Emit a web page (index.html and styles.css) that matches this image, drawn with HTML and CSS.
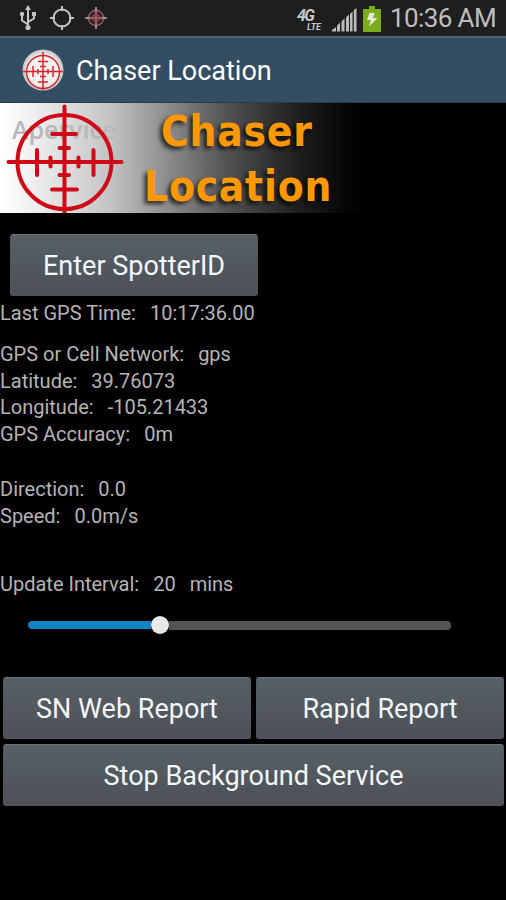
FILE: index.html
```
<!DOCTYPE html>
<html lang="en">
<head>
    <meta charset="UTF-8">
    <meta name="viewport" content="width=device-width, initial-scale=1.0">
    <title>Chaser Location</title>
    <link rel="stylesheet" href="styles.css">
</head>
<body>
    <div class="status-bar">
        <div class="status-left">
            <svg class="icon-usb" width="18" height="26" viewBox="0 0 18 26" fill="none" stroke="#c4c4c4" stroke-width="2">
                <path d="M9 3v19M9 19.500L3 15.500V9M9 17l6-3.500V8"/>
                <path d="M9 0l3 5H6z" fill="#c4c4c4" stroke="none"/>
                <circle cx="9" cy="22.500" r="2.600" fill="#c4c4c4" stroke="none"/>
                <circle cx="3" cy="9" r="2.200" fill="#c4c4c4" stroke="none"/>
                <path d="M13 7h4v4h-4z" fill="#c4c4c4" stroke="none"/>
            </svg>
            <svg class="icon-gps" width="24" height="24" viewBox="0 0 24 24" fill="none" stroke="#c4c4c4" stroke-width="2">
                <circle cx="12" cy="12" r="8.500"/>
                <path d="M12 0v5M12 19v5M0 12h5M19 12h5"/>
            </svg>
            <svg class="icon-chaser" width="22" height="22" viewBox="0 0 22 22" fill="none">
                <circle cx="11" cy="11" r="7.500" stroke="#a35b62" stroke-width="1.500"/>
                <path d="M11 2v18M2 11h18" stroke="#a35b62" stroke-width="2.400"/>
                <path d="M8 8h6M8 14h6M8 8v6M14 8v6" stroke="#8b4a50" stroke-width="1.200"/>
                <path d="M11 0v4M11 18v4M0 11h4M18 11h4" stroke="#aaa" stroke-width="1.500"/>
            </svg>
        </div>
        <div class="status-right">
            <div class="network"><span class="gen">4G</span><span class="lte">LTE</span></div>
            <svg class="icon-signal" width="25" height="24" viewBox="0 0 25 24" fill="#bcbcbc">
                <path d="M0 23.500V22l4-3v4.500zM5 23.500v-6l3-3v9zM9.500 23.500v-10l3-3v13zM14 23.500v-14l3-3v17zM18 23.500V6l2.500-2.500v20zM21.800 23.500V2l2.700-2v23.500z"/>
            </svg>
            <svg class="icon-battery" width="18" height="26" viewBox="0 0 18 26">
                <path d="M6 0h6v3h6v23H0V3h6z" fill="#7cab1b"/>
                <path d="M6.500 7h5l-1.500 5h4.500L6 20.500l2-6.500H4z" fill="#e6eedb"/>
            </svg>
            <span class="clock">10:36 AM</span>
        </div>
    </div>

    <div class="title-bar">
        <svg class="app-icon" width="42" height="44" viewBox="0 0 42 44" fill="none" stroke="#d3252c">
            <defs>
                <radialGradient id="ball">
                    <stop offset="0.700" stop-color="#f6f0f0"/>
                    <stop offset="1" stop-color="#c3c4c9"/>
                </radialGradient>
            </defs>
            <circle cx="21" cy="22" r="20.500" fill="url(#ball)" stroke="none"/>
            <circle cx="21" cy="24" r="16.500" stroke-width="1.400"/>
            <path d="M21 4v38M1 23.500h40" stroke-width="1.500"/>
            <path d="M16 13.500h10M18 18.500h6M18 28.500h6M16 34h10M11 18v11M16 21v5M26 21v5M31 18v11" stroke-width="1.500"/>
        </svg>
        <h1>Chaser Location</h1>
    </div>

    <div class="banner">
        <span class="watermark">Apervice</span>
        <svg class="reticle" width="120" height="110" viewBox="0 0 120 110" fill="none" stroke="#cf0a18" stroke-width="4" stroke-linecap="round">
            <circle cx="59.500" cy="59" r="47"/>
            <path d="M59.500 3.500v110M3.500 59h113"/>
            <path d="M47 31h24M54.500 45h9.500M54.500 72h9.500M47 86.500h25M32 47v25M45.500 54.500v9M73.500 54.500v9M88.500 47v25"/>
        </svg>
        <div class="logo-text">
            <div class="logo-chaser">Chaser</div>
            <div class="logo-location">Location</div>
        </div>
    </div>

    <div class="content">
        <button class="spotter">Enter SpotterID</button>
        <div class="info">
            <p class="gps-time"><span>Last GPS Time:</span><span>10:17:36.00</span></p>
            <p><span>GPS or Cell Network:</span><span>gps</span></p>
            <p><span>Latitude:</span><span>39.76073</span></p>
            <p><span>Longitude:</span><span>-105.21433</span></p>
            <p><span>GPS Accuracy:</span><span>0m</span></p>
            <p class="direction"><span>Direction:</span><span>0.0</span></p>
            <p><span>Speed:</span><span>0.0m/s</span></p>
            <p class="interval"><span>Update Interval:</span><span>20</span><span>mins</span></p>
        </div>
        <div class="slider">
            <div class="fill"></div>
            <div class="thumb"></div>
            <div class="rest"></div>
        </div>
        <div class="buttons">
            <button>SN Web Report</button>
            <button>Rapid Report</button>
            <button class="stop">Stop Background Service</button>
        </div>
    </div>
</body>
</html>
```
FILE: styles.css
```
* {
    box-sizing: border-box;
}
body {
    font-family: Roboto, "Liberation Sans", sans-serif;
    margin: 0;
    height: 900px;
    background-color: #000;
    color: #b4b4b4;
    overflow: hidden;
}
.status-bar {
    display: flex;
    justify-content: space-between;
    height: 36px;
    padding: 0 10px 0 19px;
    background-color: #1e1e1e;
}
.status-left, .status-right {
    display: flex;
    align-items: flex-start;
}
.icon-usb {
    margin-top: 5px;
}
.icon-gps {
    margin: 6px 0 0 13px;
}
.icon-chaser {
    margin: 7px 0 0 11px;
}
.network {
    display: flex;
    width: 27px;
    margin: 10px 8px 0 0;
    font-weight: bold;
    font-style: italic;
    color: #c8c8c8;
}
.gen {
    font-size: 16px;
    line-height: 12px;
    letter-spacing: -1.5px;
    height: 12px;
    width: 10px;
}
.lte {
    font-size: 9px;
    line-height: 9px;
    margin-top: 13px;
}
.icon-signal {
    margin: 8px 6px 0 0;
}
.icon-battery {
    margin: 6px 9px 0 0;
}
.clock {
    font-size: 26px;
    line-height: 37px;
    letter-spacing: -0.6px;
    color: #bebebe;
}
.title-bar {
    display: flex;
    align-items: center;
    height: 67px;
    padding: 0 0 1px 22px;
    background-color: #334d62;
    border-top: 2px solid #4d6371;
    border-bottom: 1px solid #263d50;
}
h1 {
    margin: 2px 0 0 12px;
    font-size: 27px;
    font-weight: normal;
    color: #fff;
}
.banner {
    position: relative;
    height: 110px;
    background: linear-gradient(to right, #fff 0, #f4f4f4 25px, #c4c4c4 110px, #858585 175px, #505050 230px, #202020 295px, #060606 345px, #000 370px);
}
.watermark {
    position: absolute;
    left: 12px;
    top: 9px;
    font: 600 25px/34px "Open Sans", sans-serif;
    color: #b8b8b8;
}
.reticle {
    position: absolute;
    left: 5px;
    top: 0;
}
.logo-text {
    padding: 1px 0 0 144px;
    font: bold 42px/55px "DejaVu Sans Condensed", "DejaVu Sans", sans-serif;
    letter-spacing: 0.8px;
    color: #ff9800;
    text-shadow: -3px 3px 4px rgba(0,0,0,0.7);
}
.logo-chaser {
    padding-left: 17px;
}
button {
    height: 62px;
    padding: 1px 0 0;
    font-family: inherit;
    font-size: 27px;
    color: #f3f7fb;
    background: linear-gradient(#585f65, #4b5157);
    border: 1px solid #50575d;
    border-top-color: #697278;
    border-radius: 3px;
}
.spotter {
    display: block;
    width: 248px;
    margin: 21px 0 0 10px;
}
.info {
    font-size: 20px;
    line-height: 26.8px;
}
.info p {
    display: flex;
    gap: 14px;
    margin: 0;
}
.info .gps-time {
    margin: 4px 0 14px;
}
.info .direction {
    margin-top: 28px;
}
.info .interval {
    margin-top: 41px;
}
.slider {
    display: flex;
    align-items: center;
    height: 18px;
    margin: 19px 55px 0 28px;
}
.fill {
    width: 123px;
    height: 8px;
    background-color: #0d83c6;
    border-radius: 4px 0 0 4px;
}
.thumb {
    width: 18px;
    height: 18px;
    border-radius: 50%;
    background-color: #e8e8e8;
}
.rest {
    flex: 1;
    height: 9px;
    background-color: #545454;
    border-radius: 0 4px 4px 0;
}
.buttons {
    display: grid;
    grid-template-columns: 1fr 1fr;
    gap: 5px;
    margin: 43px 2px 0 3px;
}
.stop {
    grid-column: span 2;
}
```
